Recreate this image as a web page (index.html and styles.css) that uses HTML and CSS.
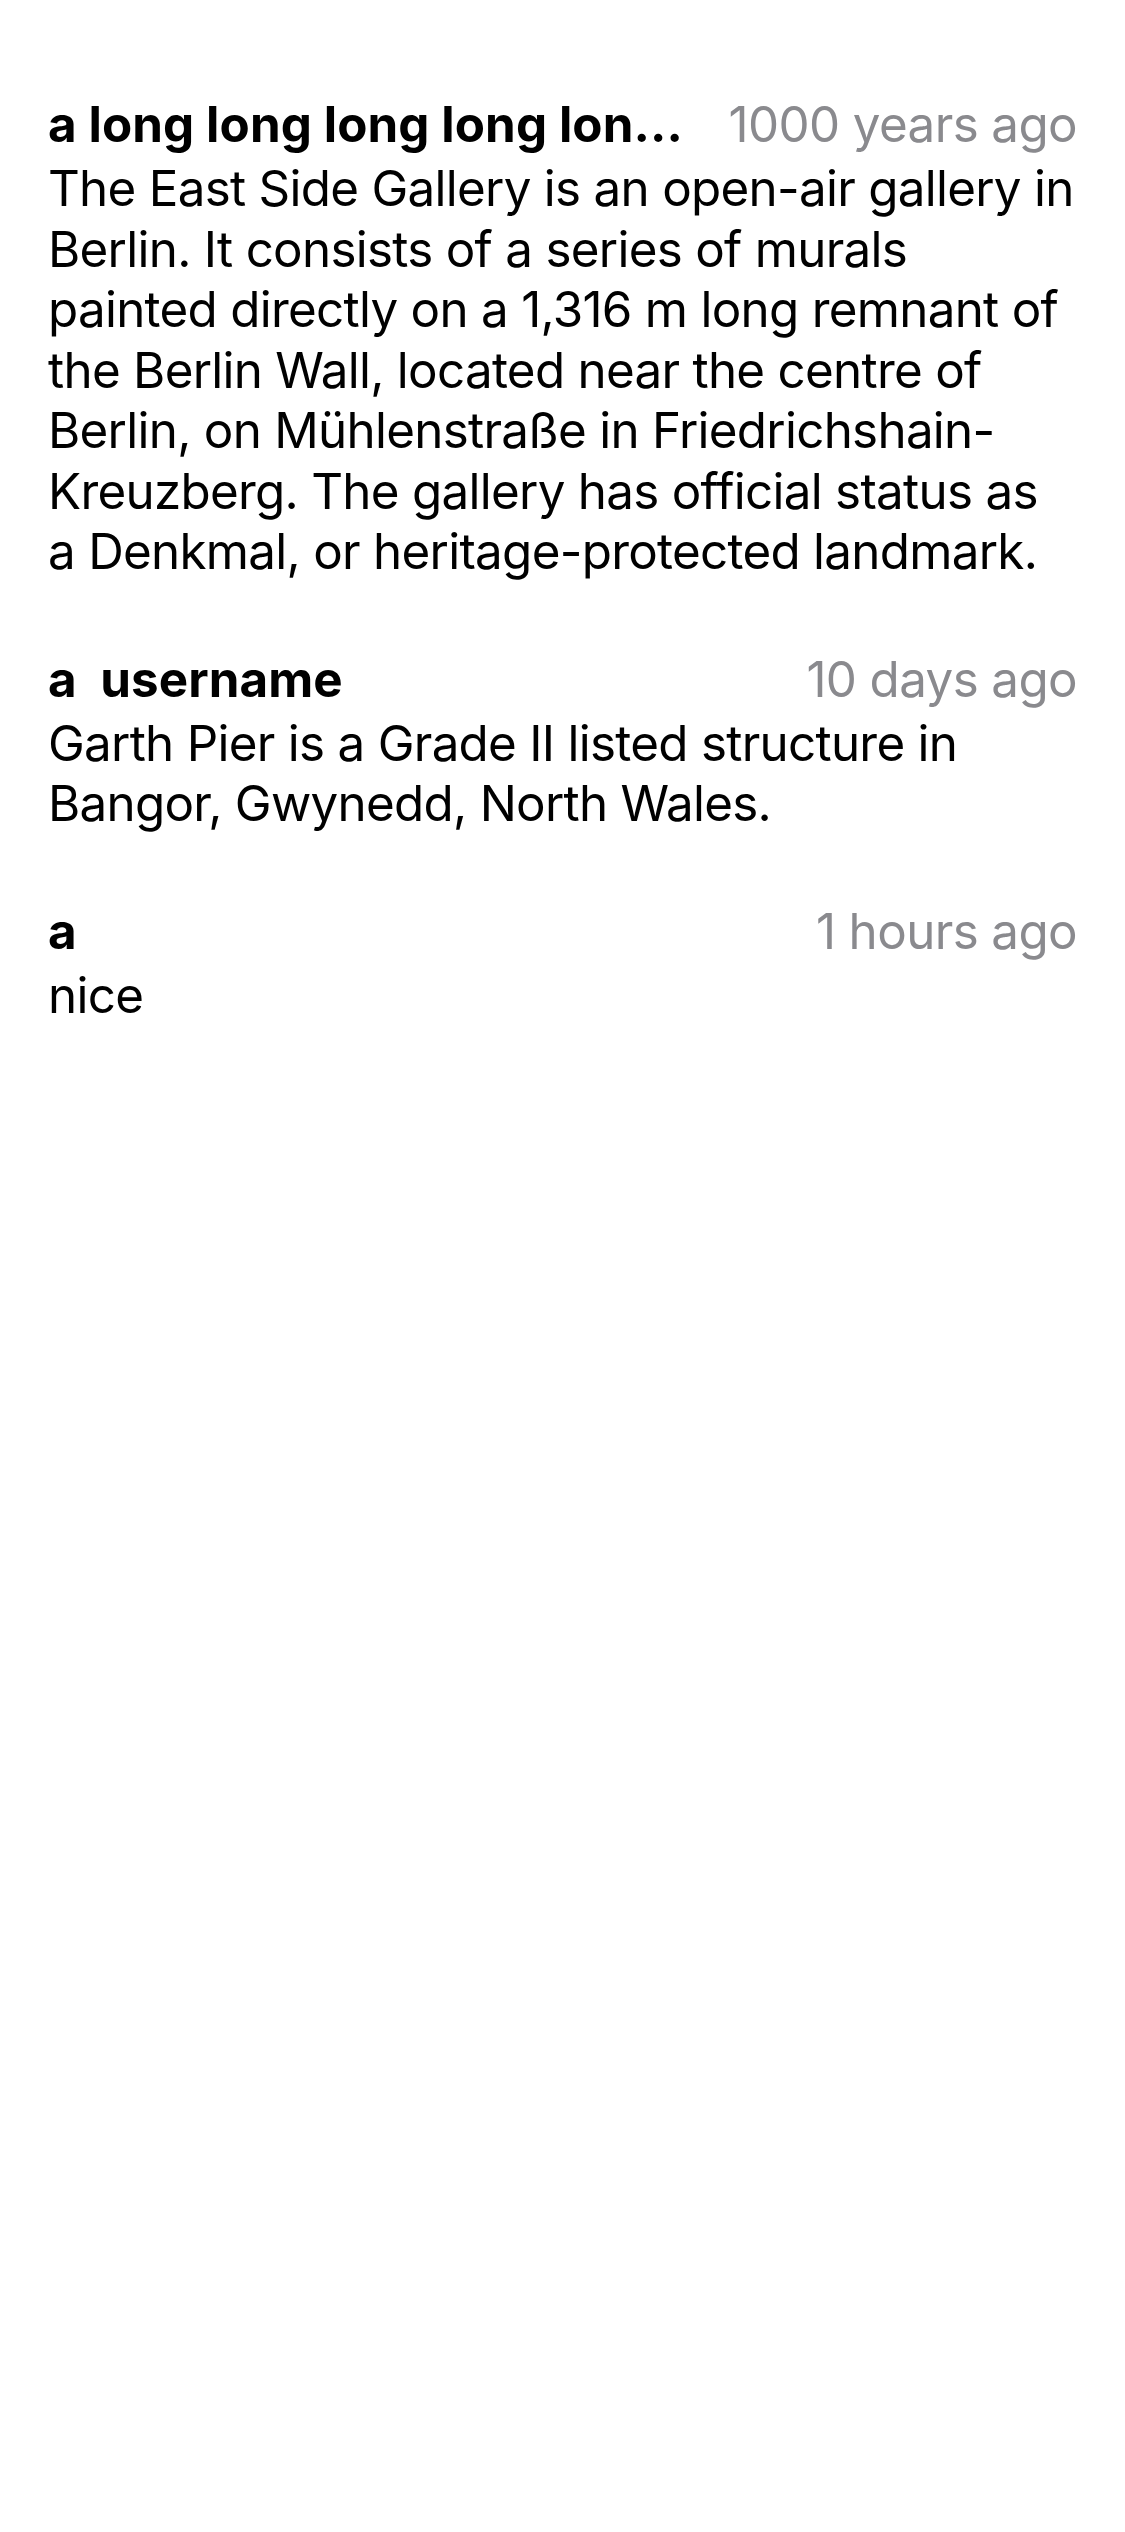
FILE: index.html
```html
<!DOCTYPE html>
<html lang="en">
<head>
<meta charset="utf-8">
<title>Comments</title>
<link rel="stylesheet" href="styles.css">
</head>
<body>
<main class="comments">
  <article class="comment">
    <header class="comment-head">
      <span class="comment-user">a long long long long lon…</span>
      <span class="comment-time">1000 years ago</span>
    </header>
    <p class="comment-body">The East Side Gallery is an open-air gallery in Berlin. It consists of a series of murals painted directly on a 1,316 m long remnant of the Berlin Wall, located near the centre of Berlin, on Mühlenstraße in Friedrichshain-Kreuzberg. The gallery has official status as a&nbsp;Denkmal, or heritage-protected landmark.</p>
  </article>
  <article class="comment">
    <header class="comment-head">
      <span class="comment-user">a&nbsp; username</span>
      <span class="comment-time">10 days ago</span>
    </header>
    <p class="comment-body">Garth Pier is a Grade II listed structure in Bangor, Gwynedd, North Wales.</p>
  </article>
  <article class="comment">
    <header class="comment-head">
      <span class="comment-user">a</span>
      <span class="comment-time">1 hours ago</span>
    </header>
    <p class="comment-body">nice</p>
  </article>
</main>
</body>
</html>
```
FILE: styles.css
```css
html, body {
  margin: 0;
  padding: 0;
  background: #ffffff;
}

body {
  font-family: Inter, "Noto Sans", "Liberation Sans", sans-serif;
  color: #000000;
  width: 1125px;
  min-height: 2532px;
}

.comments {
  display: flex;
  flex-direction: column;
  gap: 63px;
  padding: 90px 48px 0 48px;
}

.comment {
  display: flex;
  flex-direction: column;
}

.comment-head {
  display: flex;
  justify-content: space-between;
  align-items: center;
  gap: 40px;
  height: 68px;
}

.comment-user {
  font-size: 49.3px;
  font-weight: 700;
  letter-spacing: 0.1px;
  white-space: pre;
  overflow: hidden;
  text-overflow: ellipsis;
  min-width: 0;
}

.comment-time {
  font-size: 49.3px;
  font-weight: 400;
  letter-spacing: -0.6px;
  color: #8a8a8e;
  white-space: nowrap;
  flex-shrink: 0;
}

.comment-body {
  margin: 0;
  font-size: 49.3px;
  line-height: 60.5px;
  letter-spacing: -0.7px;
}
```
